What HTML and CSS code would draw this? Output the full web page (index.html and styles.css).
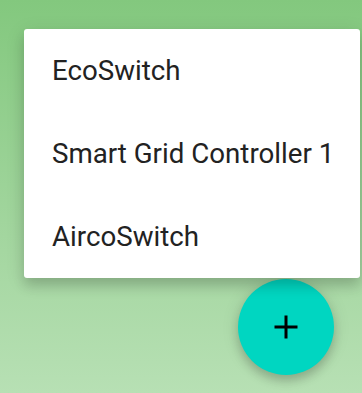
FILE: index.html
```html
<!DOCTYPE html>
<html>
<head>
<meta charset="utf-8">
<link rel="stylesheet" href="styles.css">
</head>
<body>
<div class="screen">
  <ul class="menu">
    <li class="item">EcoSwitch</li>
    <li class="item">Smart Grid Controller 1</li>
    <li class="item">AircoSwitch</li>
  </ul>
  <div class="fab-row">
    <button class="fab" aria-label="Add">
      <svg width="24" height="24" viewBox="0 0 24 24"><path d="M12 0.5v23M0.5 12h23" stroke="#000" stroke-width="3" fill="none"/></svg>
    </button>
  </div>
</div>
</body>
</html>
```
FILE: styles.css
```css
html, body {
  margin: 0;
  padding: 0;
}
body {
  width: 362px;
  height: 393px;
  overflow: hidden;
  font-family: Roboto, "Liberation Sans", sans-serif;
}
.screen {
  height: 393px;
  box-sizing: border-box;
  padding: 29px 2px 0 24px;
  background: linear-gradient(to bottom, #83c87e 0%, #a3d69f 60%, #b7e0b4 100%);
  display: flex;
  flex-direction: column;
}
.menu {
  list-style: none;
  margin: 0;
  padding: 0;
  background: #fff;
  border-radius: 3px;
  box-shadow: 0 8px 12px rgba(0, 0, 0, 0.14), 0 4px 20px rgba(0, 0, 0, 0.10);
  position: relative;
  z-index: 2;
}
.item {
  height: 83px;
  display: flex;
  align-items: center;
  padding-left: 28px;
  font-size: 27.7px;
  color: #222;
}
.fab-row {
  display: flex;
  padding-left: 214px;
  margin-top: 1px;
}
.fab {
  width: 96px;
  height: 96px;
  border-radius: 50%;
  border: none;
  padding: 0;
  background: #00d6c1;
  display: flex;
  align-items: center;
  justify-content: center;
  box-shadow: 0 6px 10px rgba(0, 0, 0, 0.18), 0 1px 18px rgba(0, 0, 0, 0.10);
}
```
